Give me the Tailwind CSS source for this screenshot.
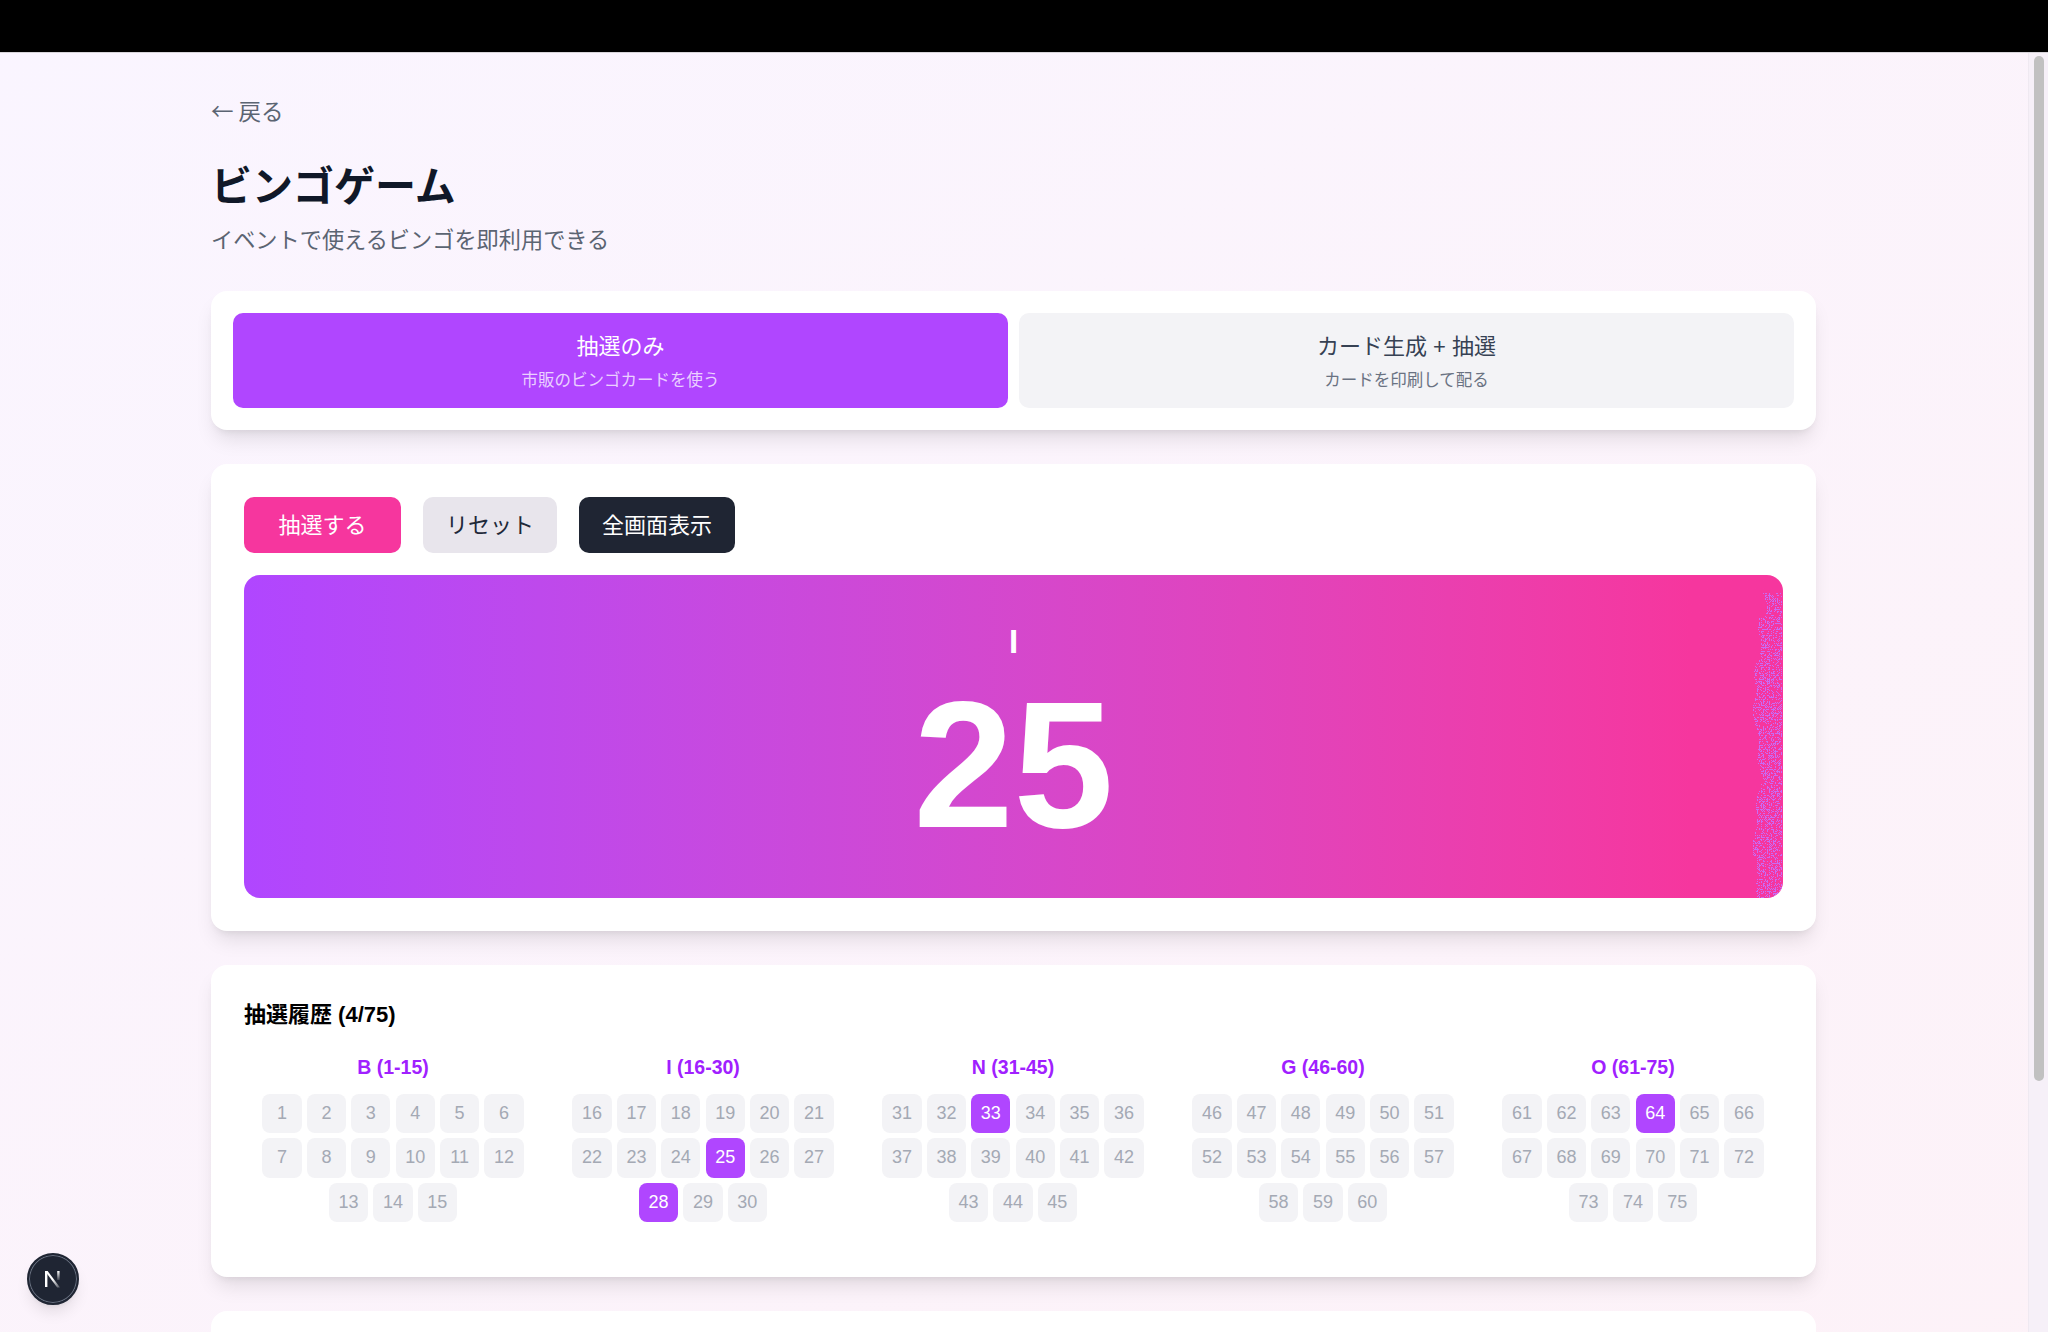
<!DOCTYPE html>
<html lang="ja">
<head>
  <meta charset="UTF-8">
  <meta name="viewport" content="width=device-width, initial-scale=1.0">
  <script src="https://cdn.jsdelivr.net/npm/@tailwindcss/browser@4"></script>
  <title>ビンゴゲーム</title>
</head>
<body class="h-screen overflow-hidden bg-black font-['Liberation_Sans','Noto_Sans_CJK_JP',sans-serif]">
  <div class="h-[52px] bg-black"></div>
  <div class="flex h-[1280px] border-t border-[#d8d5da] bg-linear-to-br from-purple-50 to-pink-50">
    <main class="flex-1 h-full overflow-hidden">
      <div class="w-[1605px] ml-[211px] pt-[42px]">
        <a href="#" class="block font-['Noto_Sans_CJK_JP',sans-serif] text-[22.5px] leading-[30px] text-[#5b6472]">← 戻る</a>
        <h1 class="mt-[36px] text-[41px] leading-[52px] font-bold text-gray-900">ビンゴゲーム</h1>
        <p class="mt-[13px] text-[22.2px] leading-[30px] text-[#5b6472]">イベントで使えるビンゴを即利用できる</p>

        <!-- mode tabs -->
        <section class="mt-[35px] p-[22px] flex gap-[11px] bg-white rounded-[16px] shadow-[0_13px_20px_-4px_rgba(0,0,0,0.1),0_5px_8px_-5px_rgba(0,0,0,0.1)]">
          <button class="flex-1 h-[95px] pt-[3px] rounded-[10px] bg-[#b046ff] text-white">
            <span class="block text-[22px] leading-[30px]">抽選のみ</span>
            <span class="block mt-[6px] text-[16.5px] leading-[24px] text-white/75">市販のビンゴカードを使う</span>
          </button>
          <button class="flex-1 h-[95px] pt-[3px] rounded-[10px] bg-[#f3f3f6] text-gray-700">
            <span class="block text-[22px] leading-[30px]">カード生成 + 抽選</span>
            <span class="block mt-[6px] text-[16.5px] leading-[24px] text-gray-500">カードを印刷して配る</span>
          </button>
        </section>

        <!-- draw -->
        <section class="mt-[34px] p-[33px] bg-white rounded-[16px] shadow-[0_13px_20px_-4px_rgba(0,0,0,0.1),0_5px_8px_-5px_rgba(0,0,0,0.1)]">
          <div class="flex gap-[22px]">
            <button class="w-[157px] h-[56px] rounded-[10px] bg-[#f6369e] text-white text-[22px]">抽選する</button>
            <button class="w-[134px] h-[56px] rounded-[10px] bg-[#e8e5ec] text-gray-800 text-[22px]">リセット</button>
            <button class="w-[156px] h-[56px] rounded-[10px] bg-[#1f2533] text-white text-[22px]">全画面表示</button>
          </div>
          <div class="relative mt-[22px] h-[323px] rounded-[16px] overflow-hidden bg-linear-to-r from-[#b046ff] from-0% to-[#f6369e] to-[94%] text-white text-center">
            <div class="pt-[48px] text-[33px] leading-[38px] font-bold">I</div>
            <div class="mt-[4px] text-[180px] leading-[200px] font-bold">25</div>
            <canvas id="noise" width="30" height="305" class="absolute right-0 top-[18px]"></canvas>
          </div>
        </section>

        <!-- history -->
        <section class="mt-[34px] h-[312px] pl-[33px] pr-[34px] pt-[34px] bg-white rounded-[16px] shadow-[0_13px_20px_-4px_rgba(0,0,0,0.1),0_5px_8px_-5px_rgba(0,0,0,0.1)]">
          <h2 class="text-[22px] leading-[32px] font-bold text-black">抽選履歴 (4/75)</h2>
          <div id="history" class="mt-[22px] grid grid-cols-5 gap-[12px]"></div>
        </section>

        <section class="mt-[34px] h-[200px] bg-white rounded-[16px]"></section>
      </div>
    </main>

    <!-- scrollbar -->
    <aside class="w-[20px] h-full pl-[5px] pr-[4px] pt-[3px] bg-[#f6f0f8] border-l border-[#efe9f1]">
      <div class="h-[1025px] rounded-full bg-[#c1c1c1]"></div>
    </aside>
  </div>

  <!-- dev indicator -->
  <div class="fixed left-[27px] top-[1253px] w-[52px] h-[52px] rounded-full bg-[#1f2533] border-2 border-[#1f2533] ring-1 ring-inset ring-gray-500 shadow-lg flex items-center justify-center">
    <svg width="22" height="22" viewBox="0 0 22 22" fill="none">
      <defs>
        <linearGradient id="nfade" x1="0" y1="0" x2="0" y2="1"><stop offset="0" stop-color="#fff"/><stop offset="1" stop-color="#fff" stop-opacity="0.15"/></linearGradient>
        <linearGradient id="nfade2" x1="0" y1="0" x2="1" y2="1"><stop offset="0.5" stop-color="#fff"/><stop offset="1" stop-color="#fff" stop-opacity="0.2"/></linearGradient>
      </defs>
      <rect x="3" y="3" width="2.4" height="16" fill="#fff"/>
      <path d="M3 3h2.6L18 19.5h-2.8z" fill="url(#nfade2)"/>
      <rect x="15.2" y="3" width="2.4" height="9" fill="url(#nfade)"/>
    </svg>
  </div>

  <script>
    const columns = [['B', 1, 15], ['I', 16, 30], ['N', 31, 45], ['G', 46, 60], ['O', 61, 75]];
    const drawn = [25, 28, 33, 64];
    const history = document.getElementById('history');

    columns.forEach(([letter, from, to]) => {
      let chips = '';
      for (let n = from; n <= to; n++) {
        const color = drawn.includes(n) ? 'bg-[#b046ff] text-white' : 'bg-[#f3f3f6] text-[#a4a9b4]';
        chips += `<span class="w-[39.2px] h-[39.2px] rounded-lg flex items-center justify-center text-[18px] ${color}">${n}</span>`;
      }
      history.innerHTML += `<div>
        <h3 class="text-center text-[19.5px] leading-[28px] font-bold text-[#a020ff]">${letter} (${from}-${to})</h3>
        <div class="mt-[13px] flex flex-wrap justify-center gap-[5.2px]">${chips}</div>
      </div>`;
    });

    // speckled strip at the right edge of the number panel
    const ctx = document.getElementById('noise').getContext('2d');
    let seed = 7;
    const rand = () => (seed = (seed * 16807) % 2147483647) / 2147483647;
    ctx.fillStyle = '#c86cf5';
    for (let y = 0; y < 305; y++) {
      let edge = 4 + 3 * Math.sin(y / 23) + 2 * Math.sin(y / 7);
      if (y < 25) edge += 6;
      for (let x = Math.max(0, Math.round(edge)); x < 29; x++) {
        if ((x % 2 === 0 || y % 2 === 0) && rand() < 0.4) ctx.fillRect(x, y, 1, 1);
      }
    }
  </script>
</body>
</html>
